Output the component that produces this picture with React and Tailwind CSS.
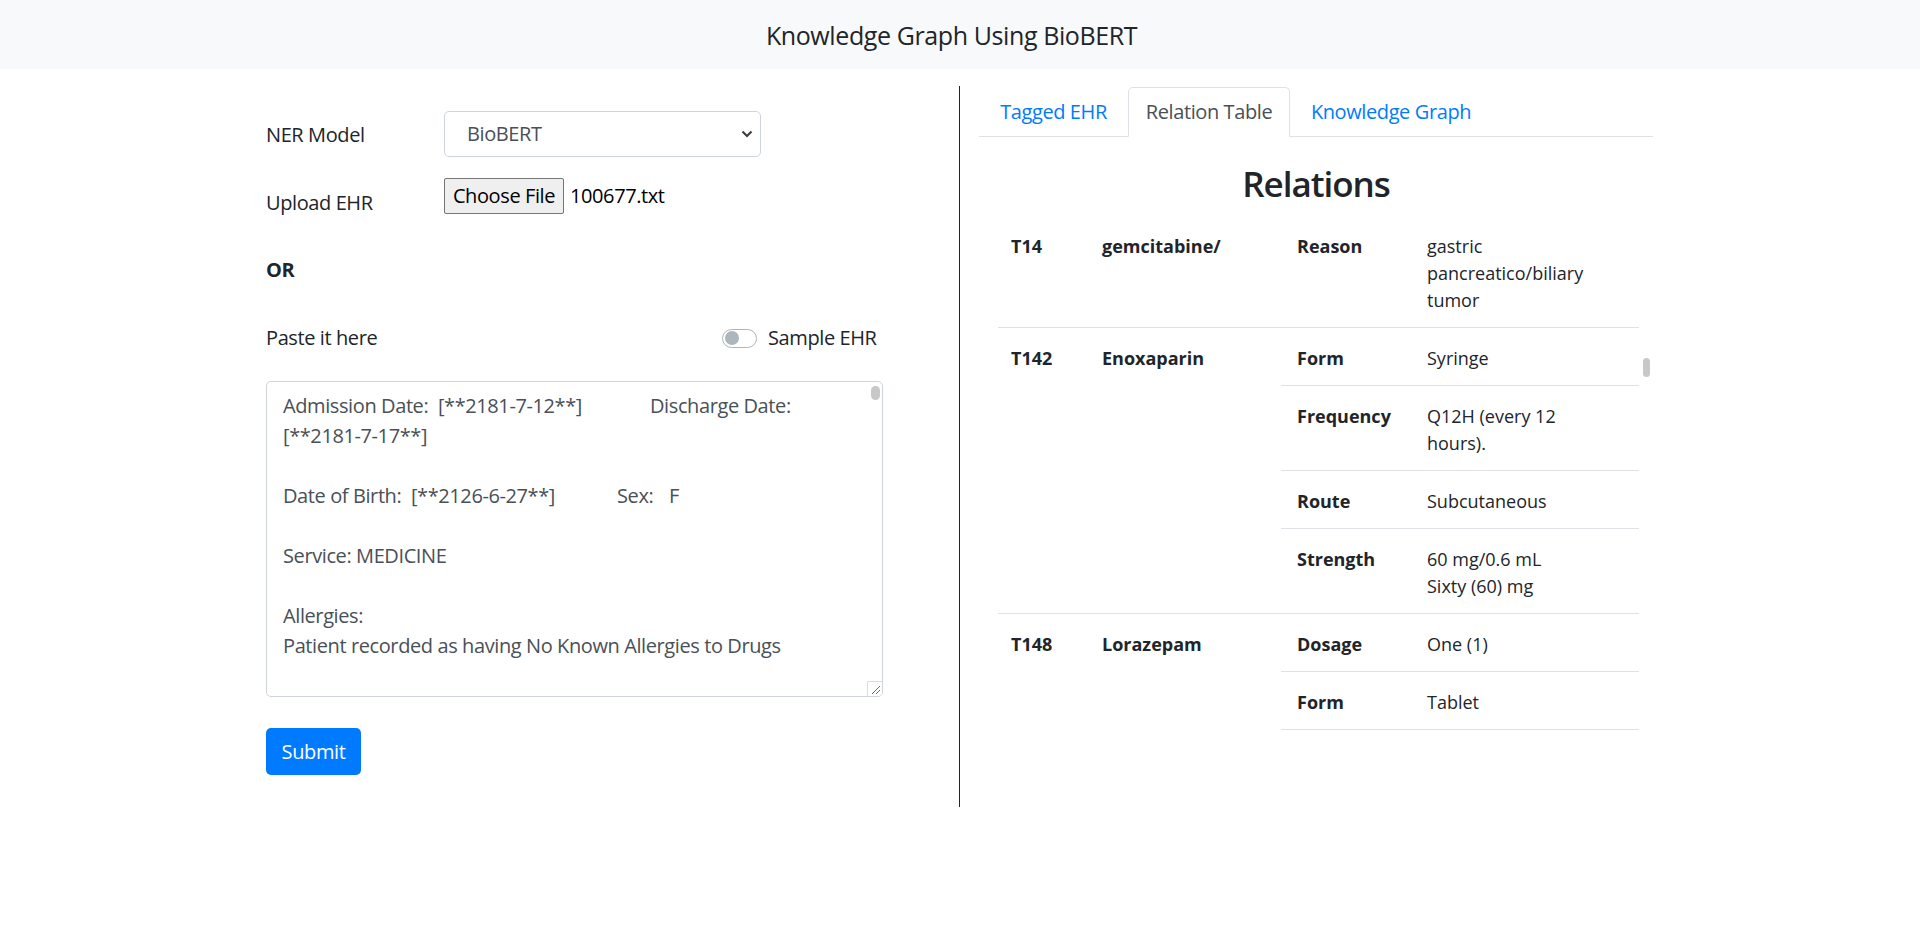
import React from "react";

const relations = [
  {
    id: "T14",
    name: "gemcitabine/",
    items: [{ k: "Reason", v: ["gastric", "pancreatico/biliary", "tumor"] }],
    outerBorder: true,
    innerLastBorder: false,
  },
  {
    id: "T142",
    name: "Enoxaparin",
    items: [
      { k: "Form", v: ["Syringe"] },
      { k: "Frequency", v: ["Q12H (every 12", "hours)."] },
      { k: "Route", v: ["Subcutaneous"] },
      { k: "Strength", v: ["60 mg/0.6 mL", "Sixty (60) mg"] },
    ],
    outerBorder: true,
    innerLastBorder: false,
  },
  {
    id: "T148",
    name: "Lorazepam",
    items: [
      { k: "Dosage", v: ["One (1)"] },
      { k: "Form", v: ["Tablet"] },
    ],
    outerBorder: false,
    innerLastBorder: true,
  },
];

function RelationRow({ r }) {
  return (
    <div className={"flex " + (r.outerBorder ? "border-b border-[#dee2e6]" : "")}>
      <div className="w-[91px] shrink-0 pl-[13px] pt-[17px] font-bold leading-[27px]">{r.id}</div>
      <div className="w-[192px] shrink-0 pl-[13px] pt-[17px] font-bold leading-[27px]">{r.name}</div>
      <div className="flex-1">
        {r.items.map((it, i) => {
          const last = i === r.items.length - 1;
          const border = !last || r.innerLastBorder;
          return (
            <div key={i} className={"flex " + (border ? "border-b border-[#dee2e6]" : "")}>
              <div className="w-[133px] shrink-0 pl-[16px] pt-[17px] pb-[13px] font-bold leading-[27px]">{it.k}</div>
              <div className="flex-1 pl-[13px] pt-[17px] pb-[13px] leading-[27px]">
                {it.v.map((line, j) => (
                  <div key={j}>{line}</div>
                ))}
              </div>
            </div>
          );
        })}
      </div>
    </div>
  );
}

export default function App() {
  return (
    <div className="min-h-[938px] w-full bg-white font-['Open_Sans',sans-serif] text-[20px] tracking-[-0.02em] text-[#212529]">
      <header className="flex h-[69px] items-center justify-center bg-[#f8f9fa] pr-[17px] text-[25px] leading-[30px]">
        Knowledge Graph Using BioBERT
      </header>

      <main className="flex pt-[17px]">
        {/* Left column */}
        <div className="ml-[266px] w-[618px] pt-[25px]">
          <div className="flex items-start">
            <div className="w-[178px] pt-[9px] leading-[30px]">NER Model</div>
            <div className="flex h-[46px] w-[317px] items-center justify-between rounded-[5px] border border-[#ced4da] pl-[22px] pr-[6px] text-[#495057]">
              <span className="leading-[30px]">BioBERT</span>
              <svg width="12" height="8" viewBox="0 0 12 8" className="mr-[1px]">
                <polyline points="1.5,1.5 6,6 10.5,1.5" fill="none" stroke="#3c4043" strokeWidth="2.2" />
              </svg>
            </div>
          </div>

          <div className="mt-[21px] flex items-start">
            <div className="w-[178px] pt-[10px] pb-[8px] leading-[30px]">Upload EHR</div>
            <div className="flex items-center">
              <div className="flex h-[36px] w-[120px] items-center justify-center rounded-[2px] border border-[#767676] bg-[#efefef] text-[20px] leading-[30px] text-black">
                Choose File
              </div>
              <span className="ml-[6px] leading-[30px] text-black">100677.txt</span>
            </div>
          </div>

          <div className="mt-[29px] font-bold leading-[30px]">OR</div>

          <div className="mt-[38px] flex items-center leading-[30px]">
            <div className="w-[456px]">Paste it here</div>
            <div className="flex h-[19px] w-[35px] items-center rounded-full border border-[#adb5bd] bg-white pl-[2px]">
              <div className="h-[14px] w-[14px] rounded-full bg-[#adb5bd]" />
            </div>
            <span className="ml-[11px]">Sample EHR</span>
          </div>

          <div className="relative mt-[28px] h-[316px] w-[617px] overflow-hidden rounded-[5px] border border-[#ced4da] bg-white pl-[16px] pt-[9px] leading-[30px] text-[#495057]">
            <div>
              <span className="inline-block w-[367px]">Admission Date:&nbsp; [**2181-7-12**]</span>
              <span>Discharge Date:</span>
            </div>
            <div>[**2181-7-17**]</div>
            <div>&nbsp;</div>
            <div>
              <span className="inline-block w-[334px]">Date of Birth:&nbsp; [**2126-6-27**]</span>
              <span className="inline-block w-[52px]">Sex:</span>
              <span>F</span>
            </div>
            <div>&nbsp;</div>
            <div>Service: MEDICINE</div>
            <div>&nbsp;</div>
            <div>Allergies:</div>
            <div>Patient recorded as having No Known Allergies to Drugs</div>
            <div>&nbsp;</div>
            <div className="absolute left-[604px] top-[4px] h-[14px] w-[9px] rounded-full bg-[#c8c8c8]" />
            <div className="absolute bottom-0 right-0 h-[15px] w-[15px] border-l border-t border-[#dcdcdc] bg-white">
              <svg width="14" height="14" viewBox="0 0 14 14">
                <line x1="4" y1="12" x2="12" y2="4" stroke="#6b6b6b" strokeWidth="1" />
                <line x1="8" y1="12" x2="12" y2="8" stroke="#6b6b6b" strokeWidth="1" />
              </svg>
            </div>
          </div>

          <button className="mt-[31px] flex h-[47px] w-[95px] items-center justify-center rounded-[5px] bg-[#007bff] leading-[30px] text-white">
            Submit
          </button>
        </div>

        {/* Divider */}
        <div className="ml-[75px] h-[721px] w-px shrink-0 bg-[#212529]" />

        {/* Right column */}
        <div className="ml-[19px] w-[674px] pt-[1px]">
          <div className="flex h-[50px] border-b border-[#dee2e6]">
            <div className="flex h-[50px] w-[149px] items-center justify-center border border-transparent text-[#007bff]">
              Tagged EHR
            </div>
            <div className="flex h-[50px] w-[162px] items-center justify-center rounded-t-[5px] border border-[#dee2e6] border-b-white bg-white text-[#495057]">
              Relation Table
            </div>
            <div className="flex h-[50px] w-[202px] items-center justify-center border border-transparent text-[#007bff]">
              Knowledge Graph
            </div>
          </div>

          <div className="mt-[25px] flex h-[44px] items-center justify-center text-[35px] font-semibold leading-[44px] tracking-[-0.03em]">
            Relations
          </div>

          <div className="relative ml-[19px] mt-[10px] h-[515px] w-[641px] overflow-hidden text-[18px] tracking-normal">
            {relations.map((r) => (
              <RelationRow key={r.id} r={r} />
            ))}
          </div>
          <div className="relative">
            <div className="absolute left-[664px] top-[-373px] h-[19px] w-[7px] rounded-full bg-[#c8c8c8]" />
          </div>
        </div>
      </main>
    </div>
  );
}
